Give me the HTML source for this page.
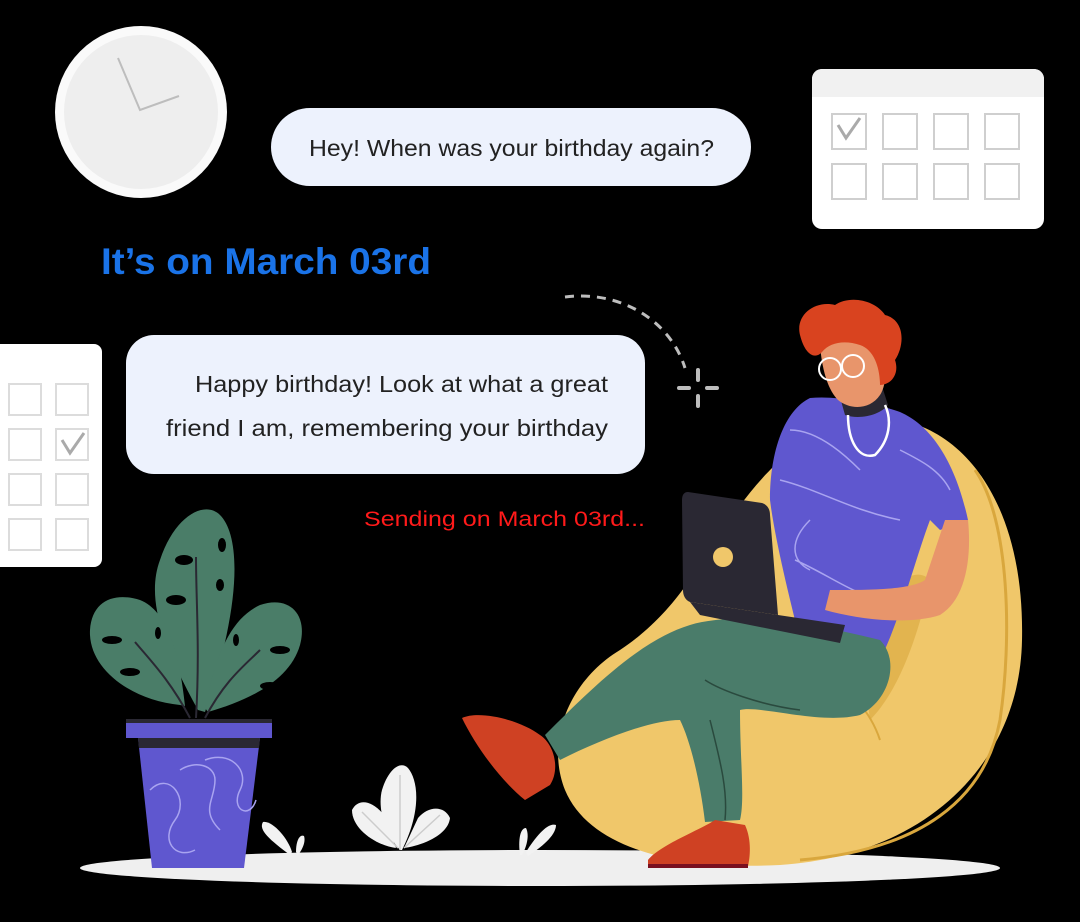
<!DOCTYPE html>
<html><head><meta charset="utf-8"><style>
html,body{margin:0;padding:0;background:#000;width:1080px;height:922px;overflow:hidden}
svg{display:block}
text{font-family:"Liberation Sans",sans-serif}
</style></head><body>
<svg width="1080" height="922" viewBox="0 0 1080 922">
<rect width="1080" height="922" fill="#000"/>
<!-- clock -->
<circle cx="141" cy="112" r="86" fill="#fafafa"/>
<circle cx="141" cy="112" r="77" fill="#eeeeee"/>
<path d="M118 58 L140 110 L179 96" stroke="#bdbdbd" stroke-width="2" fill="none"/>
<!-- bubble 1 -->
<rect x="271" y="108" width="480" height="78" rx="39" fill="#edf2fd"/>
<text x="309" y="156" font-size="23" fill="#222" textLength="405" lengthAdjust="spacingAndGlyphs">Hey! When was your birthday again?</text>
<!-- calendar top right -->
<rect x="812" y="69" width="232" height="160" rx="10" fill="#fff"/>
<path d="M822 69 H1034 a10 10 0 0 1 10 10 V97 H812 V79 a10 10 0 0 1 10 -10z" fill="#f1f1f1"/>
<g fill="none" stroke="#cfcfcf" stroke-width="2">
<rect x="832" y="114" width="34" height="35"/><rect x="883" y="114" width="34" height="35"/><rect x="934" y="114" width="34" height="35"/><rect x="985" y="114" width="34" height="35"/>
<rect x="832" y="164" width="34" height="35"/><rect x="883" y="164" width="34" height="35"/><rect x="934" y="164" width="34" height="35"/><rect x="985" y="164" width="34" height="35"/>
</g>
<path d="M838 125 L846 138 L860 118" stroke="#aaa" stroke-width="3" fill="none"/>
<!-- blue text -->
<text x="101" y="274" font-size="37" font-weight="bold" fill="#1a73e8" textLength="330" lengthAdjust="spacingAndGlyphs">It’s on March 03rd</text>
<!-- left calendar -->
<rect x="-10" y="344" width="112" height="223" rx="8" fill="#fff"/>
<g fill="none" stroke="#dcdcdc" stroke-width="2">
<rect x="9" y="384" width="32" height="31"/><rect x="56" y="384" width="32" height="31"/>
<rect x="9" y="429" width="32" height="31"/><rect x="56" y="429" width="32" height="31"/>
<rect x="9" y="474" width="32" height="31"/><rect x="56" y="474" width="32" height="31"/>
<rect x="9" y="519" width="32" height="31"/><rect x="56" y="519" width="32" height="31"/>
</g>
<path d="M62 440 L70 453 L84 433" stroke="#aaa" stroke-width="3" fill="none"/>
<!-- bubble 2 -->
<rect x="126" y="335" width="519" height="139" rx="28" fill="#edf2fd"/>
<text x="195" y="392" font-size="23" fill="#222" textLength="413" lengthAdjust="spacingAndGlyphs">Happy birthday! Look at what a great</text>
<text x="166" y="436" font-size="23" fill="#222" textLength="442" lengthAdjust="spacingAndGlyphs">friend I am, remembering your birthday</text>
<text x="364" y="526" font-size="21" fill="#ff1a1a" textLength="281" lengthAdjust="spacingAndGlyphs">Sending on March 03rd...</text>
<!-- dashed arc + sparkle -->
<path d="M565 297 C620 290 670 320 685 368" stroke="#bdbdbd" stroke-width="3" fill="none" stroke-dasharray="9 7"/>
<g stroke="#bdbdbd" stroke-width="4" stroke-linecap="round"><path d="M698 370 V380 M698 396 V406 M679 388 H689 M707 388 H717"/></g>
<!-- ground -->
<ellipse cx="540" cy="868" rx="460" ry="18" fill="#efefef"/>
<!-- small plants -->
<g fill="#f2f2f2">
<path d="M290 855 C270 840 258 830 263 822 C272 820 288 838 292 852z"/><path d="M296 852 C296 840 300 834 304 836 C306 842 302 850 298 855z"/>
<path d="M520 855 C518 840 520 828 526 828 C530 836 526 848 522 855z"/><path d="M526 852 C536 836 548 822 556 825 C556 836 540 848 528 856z"/>
<path d="M400 850 C382 830 378 805 382 790 C388 770 400 760 408 768 C418 780 422 810 402 850z"/>
<path d="M396 848 C378 846 352 830 352 810 C358 798 372 800 384 815z"/>
<path d="M404 848 C420 846 448 836 450 818 C444 805 428 806 418 818z"/>
</g>
<path d="M400 850 V775 M398 848 L362 812 M404 848 L440 815" stroke="#ccc" stroke-width="1.5" fill="none"/>
<!-- monstera plant -->
<g fill="#4a7d68">
<path d="M198 710 C165 650 145 600 160 560 C175 515 205 500 220 515 C240 535 243 600 205 712z"/>
<path d="M180 705 C130 700 88 668 90 630 C92 600 115 592 140 600 C170 612 180 660 185 706z"/>
<path d="M205 708 C215 660 228 620 260 605 C290 595 308 615 300 645 C290 680 250 700 208 712z"/>
</g>
<g fill="#000">
<ellipse cx="184" cy="560" rx="9" ry="5"/><ellipse cx="222" cy="545" rx="4" ry="7"/><ellipse cx="176" cy="600" rx="10" ry="5"/><ellipse cx="220" cy="585" rx="4" ry="6"/>
<ellipse cx="112" cy="640" rx="10" ry="4"/><ellipse cx="158" cy="633" rx="3" ry="6"/><ellipse cx="130" cy="672" rx="10" ry="4"/>
<ellipse cx="280" cy="650" rx="10" ry="4"/><ellipse cx="236" cy="640" rx="3" ry="6"/><ellipse cx="270" cy="686" rx="10" ry="4"/>
</g>
<path d="M196 718 C200 650 196 600 196 557 M190 718 C170 680 150 660 135 642 M205 718 C225 680 245 665 260 650" stroke="#2a2833" stroke-width="2" fill="none"/>
<!-- pot -->
<rect x="126" y="721" width="146" height="17" fill="#5f57cf"/>
<rect x="126" y="719" width="146" height="4" fill="#2a2833"/>
<path d="M138 738 H260 L244 868 H152z" fill="#5f57cf"/>
<path d="M138 738 H260 L259 748 H139z" fill="#2a2833"/>
<path d="M150 790 C170 770 190 800 175 820 C160 840 175 860 195 850 M205 760 C230 750 250 770 240 790 C230 810 250 820 256 800 M180 770 C195 760 215 765 215 780 C215 800 200 810 220 830" stroke="#a9a4f0" stroke-width="1.5" fill="none"/>
<!-- beanbag -->
<path d="M880 418 C960 420 1025 500 1022 640 C1020 760 930 855 780 865 C680 870 590 850 565 790 C545 740 570 680 620 650 C680 610 700 560 730 520 C770 460 820 418 880 418z" fill="#f0c76a"/>
<path d="M975 470 C1010 520 1012 640 1000 720 C985 800 920 850 800 860" stroke="#d9a73d" stroke-width="3" fill="none"/>
<path d="M860 640 C880 600 910 560 930 580 C920 630 900 690 870 720z" fill="#d9a73d" opacity=".6"/>
<path d="M820 670 C850 690 870 710 880 740" stroke="#d9a73d" stroke-width="2" fill="none"/>
<!-- shirt -->
<path d="M810 398 C840 395 880 405 900 412 C930 425 955 460 968 520 L940 530 L930 520 C915 560 900 620 880 660 L800 640 C790 600 775 540 770 500 C770 450 785 410 810 398z" fill="#5f57cf"/>
<path d="M790 430 C820 430 850 460 860 470 M780 480 C820 490 850 510 900 520 M795 560 C830 575 860 600 890 600 M900 450 C920 460 940 470 950 490 M810 520 C790 540 790 560 810 570" stroke="#a9a4f0" stroke-width="1.5" fill="none"/>
<!-- neck/face -->
<path d="M838 390 L845 415 C860 420 880 415 888 405 L880 380z" fill="#2a2833"/>
<path d="M820 345 C820 330 845 325 870 335 C885 345 890 380 880 395 C870 410 850 410 838 400 C828 390 822 370 820 345z" fill="#e8956b"/>
<path d="M800 335 C795 315 815 300 835 305 C850 295 875 300 885 315 C905 320 905 345 895 360 C900 375 890 385 880 385 C880 370 875 350 860 345 C845 340 830 342 822 352 C815 360 805 355 800 335z" fill="#d9431f"/>
<circle cx="830" cy="369" r="11" fill="none" stroke="#fff" stroke-width="2"/>
<circle cx="853" cy="366" r="11" fill="none" stroke="#fff" stroke-width="2"/>
<path d="M848 415 C848 440 858 460 875 455 C890 440 892 420 885 405" stroke="#fff" stroke-width="2.5" fill="none"/>
<!-- arm -->
<path d="M945 520 L968 520 C972 560 965 600 940 615 C910 625 860 620 825 610 L830 590 C870 590 910 590 925 580z" fill="#e8956b"/>
<!-- pants -->
<path d="M690 625 C740 610 820 625 880 640 C900 660 890 700 860 715 C820 725 760 705 740 710 C740 760 745 800 740 820 L705 822 C700 780 690 740 680 720 C650 720 600 740 560 760 L545 735 C590 690 640 640 690 625z" fill="#4a7c6a"/>
<path d="M705 680 C720 690 760 705 800 710 M710 720 C720 760 728 790 725 820" stroke="#2a4a3e" stroke-width="1.5" fill="none"/>
<!-- laptop -->
<path d="M688 492 L762 503 C768 505 770 510 770 515 L778 615 L690 602 C685 600 683 595 683 590 L682 500 C682 495 684 492 688 492z" fill="#2a2833"/>
<path d="M690 602 L778 615 L845 625 L840 643 L700 615z" fill="#2a2833"/>
<circle cx="723" cy="557" r="10" fill="#f0c76a"/>
<!-- shoes -->
<path d="M462 718 C480 710 520 720 540 735 C555 745 560 770 550 785 L525 800 C500 780 475 745 462 718z" fill="#cf4123"/>
<path d="M648 860 C660 845 700 830 715 820 L745 825 C752 840 750 858 748 866 L648 866z" fill="#cf4123"/>
<path d="M648 864 H748 V868 H648z" fill="#7a1020"/>
</svg>
</body></html>
